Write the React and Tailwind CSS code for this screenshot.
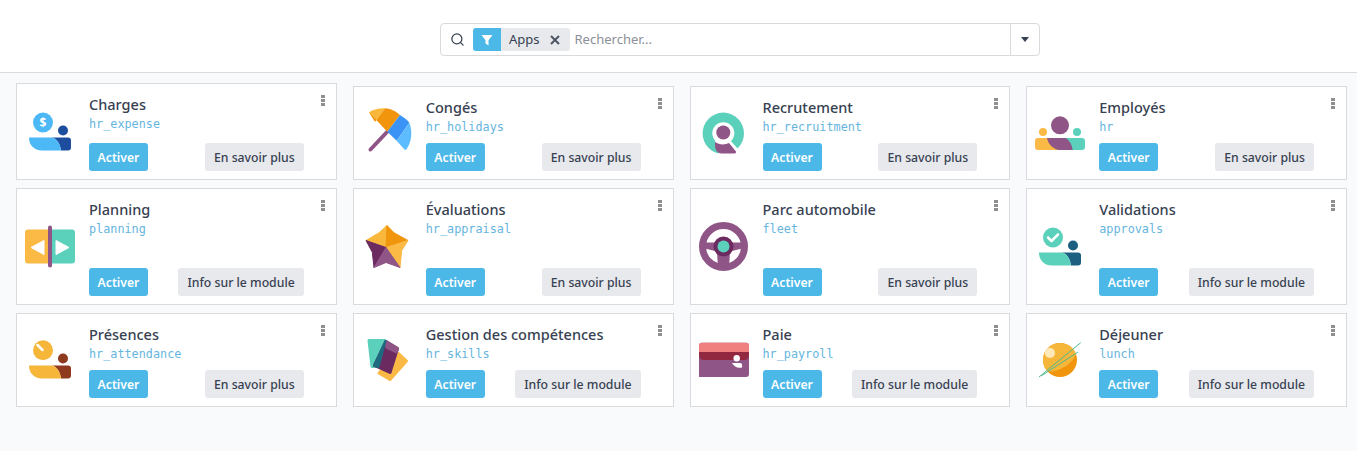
import React from 'react';
import { Search } from 'lucide-react';

const PURPLE = '#8f5586';
const PLUM = '#6b2a60';
const TEAL = '#5bd0bb';
const YELLOW = '#fbb945';
const ORANGE = '#f0950c';

// the "person with a badge" layout shared by several module icons
function PersonBase({ light, dark, small = 5 }) {
  return (
    <>
      <circle cx="38" cy="23.5" r={small} fill={dark} />
      <path d="M26 30.5H43a3 3 0 0 1 3 3V40.5a3 3 0 0 1-3 3H36C35 36 31 30.5 26 30.5Z" fill={dark} />
      <path d="M4 30.5H26C31 30.5 35 36 36 43.5H17C9 43.5 4 38 4 30.5Z" fill={light} />
    </>
  );
}

const icons = {
  expense: (
    <>
      <circle cx="18" cy="15.5" r="10" fill="#4cb8f5" />
      <text x="18" y="19.5" textAnchor="middle" fontSize="12" fontWeight="700" fill="#fff" fontFamily="'Noto Sans', sans-serif">$</text>
      <PersonBase light="#4cb8f5" dark="#1d4e9e" />
    </>
  ),
  holidays: (
    <>
      <path d="M25 24L8.5 41.5" stroke={PURPLE} strokeWidth="4" strokeLinecap="round" />
      <path d="M7 4.300C11 1.800 17 0.200 23 0.300L13 13.700Z" fill="#f9b83b" />
      <path d="M23 0.300C29 0.600 34 3.500 38 7L25.300 23.700L7 4.300L13 13.700Z" fill={ORANGE} />
      <path d="M38 7C42 9.500 45.500 12 47.300 14.700L34.700 32.700L25.300 23.700Z" fill="#3b94f5" />
      <path d="M47.300 14.700C50.500 22 50 33 45 40.500C44.500 42 43 42 42 41L34.700 32.700Z" fill="#5cbcff" />
    </>
  ),
  recruitment: (
    <>
      <circle cx="24.300" cy="25.300" r="20.700" fill={TEAL} />
      <path d="M16 33C17 38 18 42 20 46H38L40 42L30 31Z" fill="#fff" />
      <circle cx="24.300" cy="25.300" r="11" fill="#fff" />
      <circle cx="24.300" cy="24.500" r="7" fill={PURPLE} />
      <path d="M16 34C20 37 26 37 30 35L37 43.500Q37.500 45.500 35.500 45.500H22Q16.500 45 16 38Z" fill={PURPLE} />
    </>
  ),
  employees: (
    <>
      <circle cx="25" cy="17.300" r="9" fill={PURPLE} />
      <circle cx="8" cy="24" r="4" fill={YELLOW} />
      <circle cx="42" cy="24" r="4" fill={TEAL} />
      <path d="M3 30H26V42H3A3 3 0 0 1 0 39V33A3 3 0 0 1 3 30Z" fill={YELLOW} />
      <path d="M28 30H47A3 3 0 0 1 50 33V39A3 3 0 0 1 47 42H28Z" fill={TEAL} />
      <path d="M12 30H31C35 33 37 37 37.700 42H24C18 41 13 36 12 30Z" fill={PURPLE} />
    </>
  ),
  planning: (
    <>
      <path d="M3 7.500H25V41.500H3A3 3 0 0 1 0 38.500V10.500A3 3 0 0 1 3 7.500Z" fill={YELLOW} />
      <path d="M25 7.500H47A3 3 0 0 1 50 10.500V38.500A3 3 0 0 1 47 41.500H25Z" fill={TEAL} />
      <path d="M6 25.500L19 18.500V32.500Z" fill="#fff" stroke="#fff" strokeLinejoin="round" />
      <path d="M44 25.500L31 18.500V32.500Z" fill="#fff" stroke="#fff" strokeLinejoin="round" />
      <rect x="23" y="3.500" width="4" height="42" rx="2" fill={PURPLE} />
    </>
  ),
  appraisal: (
    <g strokeLinejoin="round" strokeWidth="1">
      <path d="M4 18.500L17 10.800L25 3.500L24 25.500Z" fill="#f9b83b" stroke="#f9b83b" />
      <path d="M25 3.500L32 10.800L46 18.500L24 25.500Z" fill={ORANGE} stroke={ORANGE} />
      <path d="M46 18.500L39.700 28.500L38 45.500L24 25.500Z" fill={YELLOW} stroke={YELLOW} />
      <path d="M4 18.500L24 25.500L12 45.500L10.300 30.200Z" fill={PLUM} stroke={PLUM} />
      <path d="M24 25.500L38 45.500L24 40.500L12 45.500Z" fill={PURPLE} stroke={PURPLE} />
    </g>
  ),
  fleet: (
    <>
      <circle cx="24.500" cy="24.500" r="21" fill="none" stroke={PURPLE} strokeWidth="7" />
      <path d="M4 20.500H45V26L31 29.500L30 46H19L18 29.500L4 26Z" fill={PURPLE} />
      <circle cx="24.500" cy="24.500" r="10" fill={PLUM} />
      <circle cx="24.500" cy="24.500" r="6" fill={TEAL} />
    </>
  ),
  approvals: (
    <>
      <circle cx="18" cy="15.500" r="10" fill={TEAL} />
      <path d="M13 15.500L16.500 19L23 12.500" fill="none" stroke="#fff" strokeWidth="2.500" strokeLinecap="round" strokeLinejoin="round" />
      <PersonBase light={TEAL} dark="#1d5f80" />
    </>
  ),
  attendance: (
    <>
      <circle cx="18" cy="15.300" r="10" fill="#f5b63a" />
      <path d="M12.500 10L17.500 15" stroke="#fff" strokeWidth="2.500" strokeLinecap="round" />
      <PersonBase light="#f5b63a" dark="#8f3a1e" />
    </>
  ),
  skills: (
    <g strokeLinejoin="round" strokeWidth="3">
      <path d="M36.500 18.500L44.500 26L28 44.500L17 38Z" fill={YELLOW} stroke={YELLOW} />
      <path d="M7 5.500H23L16 31.500H10Z" fill={TEAL} stroke={TEAL} />
      <path d="M24 6.500L35.500 13.500L28 37.500L12.500 30.500Z" fill={PLUM} stroke={PLUM} />
      <path d="M24 6.500L35.500 13.500L34.500 17L25 12.500Z" fill={PURPLE} stroke={PURPLE} />
      <path d="M23.500 6L16.500 32L12 30.500Z" fill="#1d6a80" stroke="#1d6a80" strokeWidth="2" />
    </g>
  ),
  payroll: (
    <>
      <path d="M3 7.700H47A3 3 0 0 1 50 10.700V39A3 3 0 0 1 47 42H0V10.700A3 3 0 0 1 3 7.700Z" fill={PURPLE} />
      <path d="M0 17H50V19.500Q50 25 45 25H5Q0 25 0 19.500Z" fill="#92283f" />
      <path d="M3 7.700H47A3 3 0 0 1 50 10.700V17H0V10.700A3 3 0 0 1 3 7.700Z" fill="#f08080" />
      <circle cx="37.700" cy="23.300" r="3.200" fill="#fff" />
      <path d="M33 28H41C43 28 43.500 30 43 32.500C39 33.500 35 32 33 28Z" fill="#fff" />
    </>
  ),
  lunch: (
    <>
      <circle cx="25" cy="25" r="17" fill={ORANGE} />
      <path d="M8 25A17 17 0 0 1 25 8C33 8 39 13 40.500 19C38 29 24 37 12.500 36.500C9.500 33.500 8 29.500 8 25Z" fill="#f5b63a" />
      <circle cx="15" cy="18" r="5" fill="#ffe9b8" />
      <path d="M4 42L45.700 7.700M6 41L43 17" stroke="#4fb98f" strokeWidth="1" />
    </>
  ),
};

const cards = [
  { name: 'Charges', tech: 'hr_expense', icon: 'expense', btn: 'En savoir plus', flush: true },
  { name: 'Congés', tech: 'hr_holidays', icon: 'holidays', btn: 'En savoir plus' },
  { name: 'Recrutement', tech: 'hr_recruitment', icon: 'recruitment', btn: 'En savoir plus' },
  { name: 'Employés', tech: 'hr', icon: 'employees', btn: 'En savoir plus' },
  { name: 'Planning', tech: 'planning', icon: 'planning', btn: 'Info sur le module', flush: true },
  { name: 'Évaluations', tech: 'hr_appraisal', icon: 'appraisal', btn: 'En savoir plus', flush: true },
  { name: 'Parc automobile', tech: 'fleet', icon: 'fleet', btn: 'En savoir plus', flush: true },
  { name: 'Validations', tech: 'approvals', icon: 'approvals', btn: 'Info sur le module', flush: true },
  { name: 'Présences', tech: 'hr_attendance', icon: 'attendance', btn: 'En savoir plus', flush: true },
  { name: 'Gestion des compétences', tech: 'hr_skills', icon: 'skills', btn: 'Info sur le module', flush: true },
  { name: 'Paie', tech: 'hr_payroll', icon: 'payroll', btn: 'Info sur le module', flush: true },
  { name: 'Déjeuner', tech: 'lunch', icon: 'lunch', btn: 'Info sur le module', flush: true },
];

function AppCard({ card }) {
  return (
    <div className={`relative flex items-center bg-white border border-[#d8dadd] pl-2 ${card.flush ? '' : 'mt-[3px]'}`}>
      <svg viewBox="0 0 50 50" className="w-[50px] h-[50px] shrink-0">{icons[card.icon]}</svg>
      <div className="flex-1 self-stretch flex flex-col justify-between ml-[14px] pr-8 pt-[10px] pb-2">
        <div>
          <div className="text-[14.5px] leading-5 font-medium text-[#374151]">{card.name}</div>
          <div className="text-[11.8px] leading-4 mt-[2px] text-[#66b5de] font-['DejaVu_Sans_Mono',monospace]">{card.tech}</div>
        </div>
        <div className="flex justify-between">
          <button className="h-7 w-[59px] pt-[2px] rounded-[3px] bg-[#4cb8e8] text-white text-[12.2px] font-semibold">Activer</button>
          <button className="h-7 px-[9px] pt-[2px] rounded-[3px] bg-[#e7e9ed] text-[#374151] text-[12.25px] font-medium">{card.btn}</button>
        </div>
      </div>
      <div className="absolute top-[11px] right-[11px] flex flex-col gap-[1px]">
        <span className="w-[4px] h-[3px] bg-[#8f8f8f]" />
        <span className="w-[4px] h-[3px] bg-[#8f8f8f]" />
        <span className="w-[4px] h-[3px] bg-[#8f8f8f]" />
      </div>
    </div>
  );
}

export default function App() {
  return (
    <div className="min-h-[451px] bg-[#f9fafb] font-['Noto_Sans',sans-serif]">
      {/* Search header */}
      <div className="h-[73px] bg-white border-b border-[#d8dadd] pl-[440px] pt-[23px]">
        <div className="w-[600px] h-[33px] flex items-stretch border border-[#d8dadd] rounded-[4px] bg-white">
          <div className="flex-1 flex items-center pl-[9px]">
            <Search size={15} strokeWidth={2} className="text-[#374151] shrink-0" />
            <div className="ml-[8px] h-[23px] flex items-stretch rounded-[3px] overflow-hidden bg-[#e7e9ed]">
              <span className="w-[28px] bg-[#4cb8e8] flex items-center justify-center">
                <svg viewBox="0 0 12 12" className="w-3 h-3"><path d="M0.5 1H11.500L7.500 6.200V11.500L4.500 9.500V6.200Z" fill="#fff" /></svg>
              </span>
              <span className="pl-2 text-[13px] leading-[23px] text-[#374151]">Apps</span>
              <span className="w-[30px] flex items-center justify-center">
                <svg viewBox="0 0 10 10" className="w-[10px] h-[10px]"><path d="M1 1L9 9M9 1L1 9" stroke="#4b5563" strokeWidth="2" /></svg>
              </span>
            </div>
            <span className="ml-[5px] text-[13px] text-[#8b9099]">Rechercher...</span>
          </div>
          <div className="w-[29px] border-l border-[#d8dadd] flex items-center justify-center">
            <span className="w-0 h-0 border-x-[4px] border-x-transparent border-t-[5px] border-t-[#374151]" />
          </div>
        </div>
      </div>

      {/* Module grid */}
      <div className="grid grid-cols-4 grid-rows-[97px_117px_94px] gap-x-4 gap-y-2 pl-4 pr-[10px] pt-[10px]">
        {cards.map((card) => (
          <AppCard key={card.tech} card={card} />
        ))}
      </div>
    </div>
  );
}
